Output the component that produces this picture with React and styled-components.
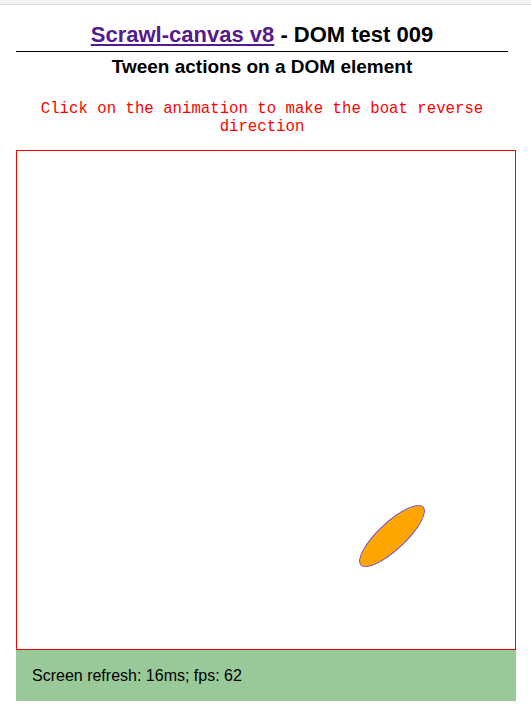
import React from "react";
import styled, { createGlobalStyle } from "styled-components";

const GlobalStyle = createGlobalStyle`
  body {
    margin: 0;
    background: #ffffff;
    font-family: "Liberation Sans", Arial, sans-serif;
  }
`;

const TopStrip = styled.div`
  height: 4px;
  background: #f3f3f3;
  border-bottom: 1px solid #dcdcdc;
`;

const Page = styled.div`
  width: 492px;
  margin-left: 16px;
`;

const Title = styled.h1`
  margin: 0;
  padding-top: 17px;
  padding-bottom: 4px;
  font-size: 22px;
  line-height: 25px;
  font-weight: bold;
  text-align: center;
  color: #000;
  border-bottom: 1px solid #000;
`;

const HomeLink = styled.a`
  color: #551a8b;
  text-decoration: underline;
`;

const SubTitle = styled.h2`
  margin: 4px 0 0;
  font-size: 19px;
  line-height: 22px;
  font-weight: bold;
  text-align: center;
`;

const Hint = styled.p`
  margin: 22px 0 0;
  font-family: "Liberation Mono", "Courier New", monospace;
  font-size: 15.7px;
  line-height: 18px;
  color: #ff0000;
  text-align: center;
`;

const Stage = styled.div`
  position: relative;
  box-sizing: border-box;
  margin-top: 14px;
  width: 500px;
  height: 500px;
  border: 1px solid #ff0000;
  overflow: hidden;
  cursor: pointer;
`;

const Boat = styled.div`
  position: absolute;
  left: ${(p) => p.$x - 43}px;
  top: ${(p) => p.$y - 14}px;
  width: 86px;
  height: 28px;
  box-sizing: border-box;
  border-radius: 50%;
  background: #ffa500;
  border: 1px solid #6a4fd6;
  transform: rotate(${(p) => p.$angle}deg);
`;

const Report = styled.div`
  width: 500px;
  box-sizing: border-box;
  padding: 16px;
  background: #99c998;
  font-size: 16px;
  line-height: 19px;
  color: #000;
`;

export default function App() {
  return (
    <>
      <GlobalStyle />
      <TopStrip />
      <Page>
        <Title>
          <HomeLink href="#">Scrawl-canvas v8</HomeLink> - DOM test 009
        </Title>
        <SubTitle>Tween actions on a DOM element</SubTitle>
        <Hint>Click on the animation to make the boat reverse direction</Hint>
        <Stage>
          <Boat $x={375} $y={385} $angle={-43} />
        </Stage>
        <Report>Screen refresh: 16ms; fps: 62</Report>
      </Page>
    </>
  );
}
